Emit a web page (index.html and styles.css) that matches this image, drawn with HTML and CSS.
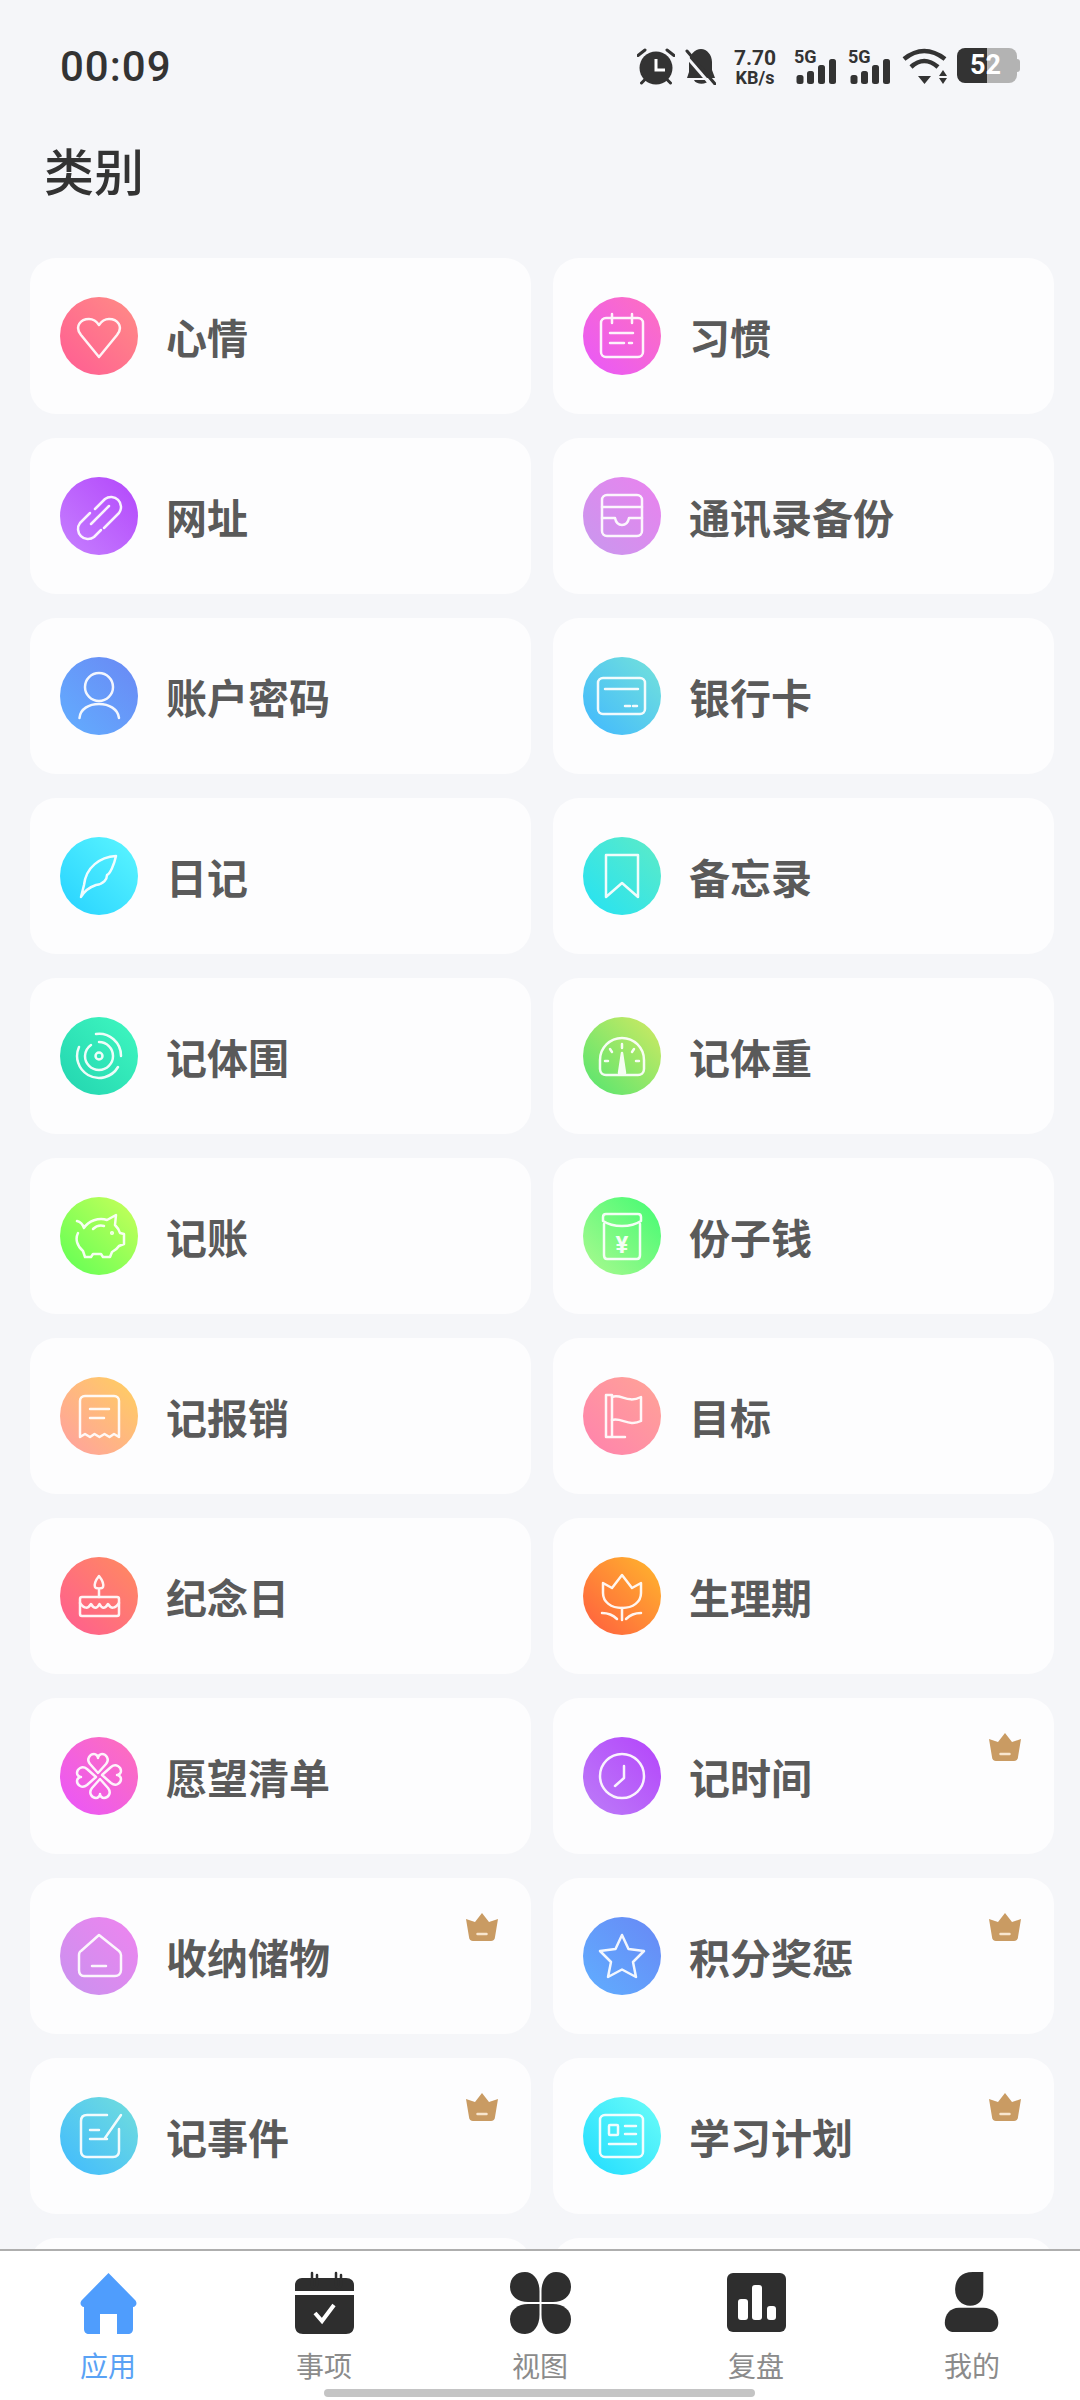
FILE: index.html
```html
<!DOCTYPE html>
<html lang="zh-CN">
<head>
<meta charset="utf-8">
<title>类别</title>
<link rel="stylesheet" href="styles.css">
</head>
<body>
<div class="screen">
  <div class="scroll">
    <header class="status">
      <span class="time">00:09</span>
      <div class="status-icons">
        <svg class="st-alarm" viewBox="0 0 38 37"><circle cx="19" cy="20" r="16.5" fill="#333"/><path d="M19 11V22H28" class="st-w"/><path d="M1 7.5L8 2M30 2L37 7.5M4.5 35L8 31.500M33.500 35L30 31.500" class="st-d"/></svg>
        <svg class="st-bell" viewBox="0 0 31 37"><path d="M16 1C22 1 27 7 27 14V22L30 30H2L4 24V14C4 7 10 1 16 1Z" fill="#333"/><path d="M9 32H24C22 37 11 37 9 32Z" fill="#333"/><path d="M0 7L26 37" class="st-gap"/><path d="M2 3L30 36" class="st-d"/></svg>
        <div class="speed"><span class="speed-num">7.70</span><span class="speed-unit">KB/s</span></div>
        <svg class="st-net" viewBox="0 0 44 37"><text x="0" y="15" class="st-5g">5G</text><rect x="2.500" y="27" width="7" height="9" rx="2.500"/><rect x="13" y="23" width="7" height="13" rx="2.500"/><rect x="24" y="17" width="7" height="19" rx="2.500"/><rect x="35" y="11" width="7" height="25" rx="2.500"/></svg>
        <svg class="st-net" viewBox="0 0 44 37"><text x="0" y="15" class="st-5g">5G</text><rect x="2.500" y="27" width="7" height="9" rx="2.500"/><rect x="13" y="23" width="7" height="13" rx="2.500"/><rect x="24" y="17" width="7" height="19" rx="2.500"/><rect x="35" y="11" width="7" height="25" rx="2.500"/></svg>
        <svg class="st-wifi" viewBox="0 0 45 37"><path d="M2 11Q22 -5 43 11M9 19Q22 7 36 19" class="st-arc"/><path d="M16 28H29L22.500 36Z M37 28L41 22L45 28Z M37 30H45L41 36Z" fill="#333"/></svg>
        <div class="battery"><span>52</span></div>
      </div>
    </header>
    <h1 class="title">类别</h1>
    <div class="grid">

      <div class="card"><div class="dot c1"><svg class="ic" viewBox="0 0 78 78"><path d="M39 60L21 38C14 29 21 22 29 22C33 22 37 25 39 28C41 25 45 22 49 22C57 22 64 29 57 38Z"/></svg></div><span class="name">心情</span></div>

      <div class="card"><div class="dot c2"><svg class="ic" viewBox="0 0 78 78"><rect x="18" y="21" width="42" height="39" rx="5"/><path d="M29 17V26M49 17V26M27 36H50M27 46H41M46 46H49"/></svg></div><span class="name">习惯</span></div>

      <div class="card"><div class="dot c3"><svg class="ic" viewBox="0 0 78 78"><path d="M35 32L45 22A10 10 0 0 1 59 36L44 51"/><path d="M30 36L20 46A10 10 0 0 0 34 60L41 53"/><path d="M31 47L49 29"/></svg></div><span class="name">网址</span></div>

      <div class="card"><div class="dot c4"><svg class="ic" viewBox="0 0 78 78"><rect x="19" y="18" width="40" height="41" rx="5"/><path d="M19 30H59M19 41H32C33 46 36 48 39 48C42 48 45 46 46 41H59"/></svg></div><span class="name">通讯录备份</span></div>

      <div class="card"><div class="dot c5"><svg class="ic" viewBox="0 0 78 78"><ellipse cx="39" cy="30" rx="14" ry="14"/><path d="M19.500 61C20 52 29 47 39 47C49 47 58 52 59 61"/></svg></div><span class="name">账户密码</span></div>

      <div class="card"><div class="dot c6"><svg class="ic" viewBox="0 0 78 78"><rect x="15" y="21" width="47" height="36" rx="5"/><path d="M22 32H55M42 49H47M50 49H54"/></svg></div><span class="name">银行卡</span></div>

      <div class="card"><div class="dot c7"><svg class="ic" viewBox="0 0 78 78"><path d="M56 19C40 20 26 30 24 48L21 60C25 53 30 50 36 48C44 47 47 42 47 38C50 37 54 28 56 19Z"/></svg></div><span class="name">日记</span></div>

      <div class="card"><div class="dot c8"><svg class="ic" viewBox="0 0 78 78"><path d="M23 18H55V60L39 46L23 60Z"/></svg></div><span class="name">备忘录</span></div>

      <div class="card"><div class="dot c9"><svg class="ic" viewBox="0 0 78 78"><circle cx="39" cy="39" r="3.500"/><path d="M39 25A14 14 0 0 1 53 39A14 14 0 0 1 39 53A14 14 0 0 1 25 39A14 14 0 0 1 31 28"/><path d="M36 17A22 22 0 0 1 61 39M58 50A22 22 0 0 1 28 58A22 22 0 0 1 19 30"/></svg></div><span class="name">记体围</span></div>

      <div class="card"><div class="dot c10"><svg class="ic" viewBox="0 0 78 78"><path d="M23 58H55C58 58 61 56 61 52V43A22 22 0 0 0 17 43V52C17 56 20 58 23 58Z"/><path d="M39 27V31M27 32L29 35M51 32L49 35M22 44H25M53 44H56"/><path d="M39 36L42 56H36Z" class="ic-fill"/></svg></div><span class="name">记体重</span></div>

      <div class="card"><div class="dot c11"><svg class="ic" viewBox="0 0 78 78"><path d="M17 24C21 25 23 28 24 31C28 24 39 20 47 23L56 18L55 28C57 30 59 32 60 36L64 37V47L59 49C57 52 54 54 52 55L50 60H43L41 57H33L31 60H25L23 54C17 49 15 42 18 36"/><path d="M33 32C36 29 40 28 44 29"/><circle cx="52" cy="36" r="0.800"/></svg></div><span class="name">记账</span></div>

      <div class="card"><div class="dot c12"><svg class="ic" viewBox="0 0 78 78"><path d="M23 17H55C57 17 58 18 58 20V24C52 28 45 29 39 29C33 29 26 28 20 24V20C20 18 21 17 23 17Z"/><path d="M21 27V58C21 60 22 62 24 62H54C56 62 57 60 57 58V27"/><text x="39" y="56" text-anchor="middle" class="ic-yen">¥</text></svg></div><span class="name">份子钱</span></div>

      <div class="card"><div class="dot c13"><svg class="ic" viewBox="0 0 78 78"><path d="M25 19H54C57 19 59 21 59 24V60L54 57L49.500 60L44.500 57L39.500 60L34.500 57L30 60L25 57L20 60V24C20 21 22 19 25 19Z"/><path d="M30 32H49M30 41H44"/></svg></div><span class="name">记报销</span></div>

      <div class="card"><div class="dot c14"><svg class="ic" viewBox="0 0 78 78"><path d="M23 60V18H29V60M23 60H42"/><path d="M29 20C38 16 44 27 58 20V44C46 50 38 40 29 43"/></svg></div><span class="name">目标</span></div>

      <div class="card"><div class="dot c15"><svg class="ic" viewBox="0 0 78 78"><rect x="20" y="40" width="39" height="19" rx="2"/><path d="M20 46C24 52 28 52 31 47C34 52 37 52 39.500 47C42 52 45 52 48 47C51 52 55 52 59 46"/><path d="M39 33V40"/><path d="M39 19C35 24 34 27 35 30C36 32 42 32 43 30C44 27 43 24 39 19Z"/></svg></div><span class="name">纪念日</span></div>

      <div class="card"><div class="dot c16"><svg class="ic" viewBox="0 0 78 78"><path d="M20 26L29 31L39 18L49 31L58 26V36C58 45 50 51 39 51C28 51 20 45 20 36Z"/><path d="M39 51V63M19 56C25 56 30 58 34 62M58 56C52 56 47 58 43 62"/></svg></div><span class="name">生理期</span></div>

      <div class="card"><div class="dot c17"><svg class="ic" viewBox="0 0 78 78"><g><path id="petal" d="M38 36L30 27C26 22 30 17 34 17C36 17 38 19 38 21C38 19 40 17 42 17C46 17 50 22 46 27Z"/><use href="#petal" transform="rotate(90 39 39)"/><use href="#petal" transform="rotate(180 39 39)"/><use href="#petal" transform="rotate(270 39 39)"/></g></svg></div><span class="name">愿望清单</span></div>

      <div class="card"><div class="dot c18"><svg class="ic" viewBox="0 0 78 78"><circle cx="39" cy="39" r="22"/><path d="M41 29V41L32 49"/></svg><span></span></div><span class="name">记时间</span><svg class="crown" viewBox="0 0 32 28"><path class="crown-b" d="M16 0L23 9L32 6L29 24C29 26.500 27 28 25 28H7C5 28 3 26.500 3 24L0 6L9 9Z"/><path class="crown-d" d="M11.500 21H20.500"/></svg></div>

      <div class="card"><div class="dot c19"><svg class="ic" viewBox="0 0 78 78"><path d="M39 18L59 34C60 35 61 36 61 38V53C61 57 58 59 55 59H24C21 59 19 57 19 53V38C19 36 19 35 21 34Z"/><path d="M32 49H46"/></svg></div><span class="name">收纳储物</span><svg class="crown" viewBox="0 0 32 28"><path class="crown-b" d="M16 0L23 9L32 6L29 24C29 26.500 27 28 25 28H7C5 28 3 26.500 3 24L0 6L9 9Z"/><path class="crown-d" d="M11.500 21H20.500"/></svg></div>

      <div class="card"><div class="dot c20"><svg class="ic" viewBox="0 0 78 78"><path d="M39 18L45.500 32L61 34L50 45L53 60L39 52.500L25 60L28 45L17 34L32.500 32Z"/></svg></div><span class="name">积分奖惩</span><svg class="crown" viewBox="0 0 32 28"><path class="crown-b" d="M16 0L23 9L32 6L29 24C29 26.500 27 28 25 28H7C5 28 3 26.500 3 24L0 6L9 9Z"/><path class="crown-d" d="M11.500 21H20.500"/></svg></div>

      <div class="card"><div class="dot c21"><svg class="ic" viewBox="0 0 78 78"><path d="M47 18H27C23 18 21 20 21 24V54C21 58 23 60 27 60H53C57 60 59 58 59 54V32"/><path d="M30 33H39M30 42H47M45 41L61 18"/></svg></div><span class="name">记事件</span><svg class="crown" viewBox="0 0 32 28"><path class="crown-b" d="M16 0L23 9L32 6L29 24C29 26.500 27 28 25 28H7C5 28 3 26.500 3 24L0 6L9 9Z"/><path class="crown-d" d="M11.500 21H20.500"/></svg></div>

      <div class="card"><div class="dot c22"><svg class="ic" viewBox="0 0 78 78"><rect x="17" y="18" width="43" height="42" rx="5"/><rect x="26" y="28" width="9" height="10" rx="1"/><path d="M42 29H53M42 37H53M26 47H53"/></svg></div><span class="name">学习计划</span><svg class="crown" viewBox="0 0 32 28"><path class="crown-b" d="M16 0L23 9L32 6L29 24C29 26.500 27 28 25 28H7C5 28 3 26.500 3 24L0 6L9 9Z"/><path class="crown-d" d="M11.500 21H20.500"/></svg></div>

      <div class="card"></div>
      <div class="card"></div>
    </div>
  </div>

  <nav class="tabbar">
    <div class="tab tab-active">
      <svg class="tab-ic" viewBox="0 0 61 62"><path class="blue" d="M30.500 1L57 28C60 31 58 35 55 35V57C55 60 53 62 50 62H39V42H22V62H11C8 62 6 60 6 57V35C3 35 1 31 4 28Z"/></svg>
      <span class="tab-label">应用</span>
    </div>
    <div class="tab">
      <svg class="tab-ic" viewBox="0 0 61 62"><path class="dark" d="M8 6H52C57 6 60 9 60 13V19H1V13C1 9 4 6 8 6Z"/><path class="dark" d="M1 23H60V54C60 59 57 62 52 62H9C4 62 1 59 1 54Z"/><path d="M18 1V13A2.500 2.500 0 0 0 23 13V3M42 1V13A2.500 2.500 0 0 0 47 13V3" class="ring"/><path d="M21 41L28 49L40 33" class="check"/></svg>
      <span class="tab-label">事项</span>
    </div>
    <div class="tab">
      <svg class="tab-ic" viewBox="0 0 61 62"><path class="dark" d="M15 0C24 0 29.500 9 29.500 19V30H18C8 30 0 24 0 15C0 6 6 0 15 0Z"/><path class="dark" d="M46 0C37 0 31.500 9 31.500 19V30H43C53 30 61 24 61 15C61 6 55 0 46 0Z"/><path class="dark" d="M15 62C24 62 29.500 53 29.500 43V32H18C8 32 0 38 0 47C0 56 6 62 15 62Z"/><path class="dark" d="M46 62C37 62 31.500 53 31.500 43V32H43C53 32 61 38 61 47C61 56 55 62 46 62Z"/></svg>
      <span class="tab-label">视图</span>
    </div>
    <div class="tab">
      <svg class="tab-ic" viewBox="0 0 61 62"><rect class="dark" x="1" y="1" width="59" height="59" rx="6"/><rect class="white" x="12" y="27" width="10" height="21" rx="3"/><rect class="white" x="26" y="13" width="10" height="35" rx="3"/><rect class="white" x="41" y="34" width="9" height="14" rx="3"/></svg>
      <span class="tab-label">复盘</span>
    </div>
    <div class="tab">
      <svg class="tab-ic" viewBox="0 0 61 66"><path class="dark" d="M42 0H31C17 0 12 9 12 19C12 29 19 36 28 36C37 36 42 30 42 21Z"/><path class="dark" d="M16 38H42C52 38 58 45 58 54C58 60 54 64 48 64H11C5 64 1 60 1 54C1 45 7 38 16 38Z"/></svg>
      <span class="tab-label">我的</span>
    </div>
    <div class="home-bar"></div>
  </nav>
</div>
</body>
</html>
```
FILE: styles.css
```css
* { box-sizing: border-box; }
html, body { margin: 0; padding: 0; }
body {
  width: 1080px;
  height: 2400px;
  background: #f5f6f9;
  font-family: "Noto Sans CJK SC", "Noto Sans", sans-serif;
  overflow: hidden;
}
.screen { width: 1080px; height: 2400px; display: flex; flex-direction: column; }
.scroll { flex: 1; min-height: 0; overflow: hidden; }

/* status bar */
.status {
  height: 130px;
  padding: 46px 60px 0 60px;
  display: flex;
  justify-content: space-between;
  align-items: flex-start;
}
.time {
  font-family: Roboto, sans-serif;
  font-weight: 500;
  font-size: 42px;
  line-height: 42px;
  letter-spacing: 1px;
  color: #333;
}
.status-icons { display: flex; align-items: flex-start; gap: 10px; margin-top: 2px; margin-right: 0; }
.st-alarm { width: 38px; height: 37px; }
.st-bell { width: 31px; height: 37px; }
.st-net { width: 44px; height: 37px; fill: #333; }
.st-wifi { width: 45px; height: 37px; }
.st-w { fill: none; stroke: #fff; stroke-width: 3; }
.st-d { fill: none; stroke: #333; stroke-width: 3; stroke-linecap: round; }
.st-gap { fill: none; stroke: #f5f6f9; stroke-width: 3; }
.st-arc { fill: none; stroke: #333; stroke-width: 4.500; }
.st-5g { font-family: Roboto, sans-serif; font-weight: 700; font-size: 18px; fill: #333; }
.speed {
  display: flex;
  flex-direction: column;
  align-items: center;
  width: 42px;
  margin: 0 8px;
  font-family: Roboto, sans-serif;
  font-weight: 700;
  color: #333;
}
.speed-num { font-size: 21px; line-height: 21px; margin-top: 0; }
.speed-unit { font-size: 18px; line-height: 18px; }
.battery {
  position: relative;
  width: 60px;
  height: 35px;
  margin-right: 3px;
  padding-left: 13px;
  border-radius: 8px;
  background: linear-gradient(90deg, #333 30px, #b3b3b3 30px);
  font-family: Roboto, sans-serif;
  font-weight: 700;
  font-size: 27px;
  line-height: 35px;
  color: #fff;
}
.battery::after {
  content: "";
  position: absolute;
  right: -3px;
  top: 11px;
  width: 3px;
  height: 13px;
  border-radius: 0 3px 3px 0;
  background: #b3b3b3;
}

.title {
  margin: 0;
  height: 128px;
  padding: 0 0 0 44px;
  font-size: 50px;
  line-height: 78px;
  font-weight: 500;
  color: #333;
}

/* grid */
.grid {
  display: grid;
  grid-template-columns: 501px 501px;
  grid-auto-rows: 156px;
  gap: 24px 22px;
  padding-left: 30px;
}
.card {
  position: relative;
  display: flex;
  align-items: center;
  gap: 28px;
  padding-left: 30px;
  background: #fdfdfe;
  border-radius: 26px;
}
.dot { width: 78px; height: 78px; border-radius: 50%; flex: none; }
.ic {
  display: block;
  width: 78px;
  height: 78px;
  fill: none;
  stroke: #fff;
  stroke-width: 2.500;
  stroke-linecap: round;
  stroke-linejoin: round;
  opacity: 0.92;
}
.ic-fill { fill: #fff; }
.ic-yen { fill: #fff; stroke: none; font-family: Roboto, sans-serif; font-weight: 700; font-size: 24px; }
.name { font-size: 41px; line-height: 56px; font-weight: 700; color: #5a5a5a; }
.crown { position: absolute; top: 35px; right: 33px; width: 32px; height: 28px; }
.crown-b { fill: #c99b63; }
.crown-d { fill: none; stroke: #f8e6cf; stroke-width: 2.500; stroke-linecap: round; }

.c1 { background: linear-gradient(45deg, #ff5c94, #ff8d85); }
.c2 { background: linear-gradient(45deg, #e858fb, #ff70bd); }
.c3 { background: linear-gradient(45deg, #c680ff, #b347fb); }
.c4 { background: linear-gradient(45deg, #c898ee, #ea82ee); }
.c5 { background: linear-gradient(45deg, #62aeff, #6a88f4); }
.c6 { background: linear-gradient(45deg, #40b8ff, #74e2da); }
.c7 { background: linear-gradient(45deg, #26d2ff, #5cf6ff); }
.c8 { background: linear-gradient(45deg, #24e2f4, #5eebc6); }
.c9 { background: linear-gradient(45deg, #22d4b0, #40f8c0); }
.c10 { background: linear-gradient(45deg, #52e570, #d2e962); }
.c11 { background: linear-gradient(45deg, #5eff55, #caff5a); }
.c12 { background: linear-gradient(45deg, #acf990, #42fb72); }
.c13 { background: linear-gradient(45deg, #ff9fa2, #ffd05e); }
.c14 { background: linear-gradient(45deg, #ff82ae, #ffa496); }
.c15 { background: linear-gradient(45deg, #ff5c92, #ff8c5e); }
.c16 { background: linear-gradient(45deg, #ff5c40, #ffb82c); }
.c17 { background: linear-gradient(45deg, #e955fc, #ff70b8); }
.c18 { background: linear-gradient(45deg, #bc7df8, #b444fb); }
.c19 { background: linear-gradient(45deg, #c892ef, #ef84ef); }
.c20 { background: linear-gradient(45deg, #60aeff, #6888f5); }
.c21 { background: linear-gradient(45deg, #40baff, #72dedc); }
.c22 { background: linear-gradient(45deg, #20dcff, #6cfdf8); }

/* tab bar */
.tabbar {
  position: relative;
  flex: none;
  height: 151px;
  display: grid;
  grid-template-columns: repeat(5, 216px);
  background: #fff;
  border-top: 2px solid #aeaeae;
}
.tab {
  display: flex;
  flex-direction: column;
  align-items: center;
  padding-top: 21px;
}
.tab-ic { width: 61px; height: 62px; display: block; overflow: visible; }
.tab-label {
  margin-top: 14px;
  font-size: 28px;
  line-height: 34px;
  color: #8b8b8b;
}
.tab-active .tab-label { color: #5aa2f5; }
.blue { fill: #4f9dfd; }
.dark { fill: #2e2e2e; }
.white { fill: #fff; }
.ring { fill: none; stroke: #fff; stroke-width: 2.500; stroke-linecap: round; }
.check { fill: none; stroke: #fff; stroke-width: 4; }
.ring { stroke: #2e2e2e; }
.home-bar {
  position: absolute;
  left: 324px;
  bottom: 3px;
  width: 431px;
  height: 8px;
  border-radius: 4px;
  background: #c4c4c4;
}
```
